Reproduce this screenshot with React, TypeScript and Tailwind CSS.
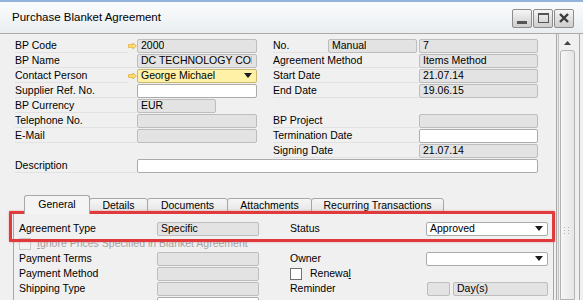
import type { ReactNode } from "react";

type Tone = "gray" | "white" | "yellow";

const toneClass: Record<Tone, string> = {
  gray: "bg-[#e3e3e3] border-[#bdbdbd]",
  white: "bg-white border-[#ababab]",
  yellow: "bg-[#fff1a6] border-[#c8b870]",
};

const DropArrow = () => (
  <svg width="8" height="5" viewBox="0 0 8 5" className="shrink-0">
    <path d="M0 0h8L4 5z" fill="#1a1a1a" />
  </svg>
);

const LinkArrow = () => (
  <svg width="10" height="8" viewBox="0 0 10 8">
    <path
      d="M0.5 2.5h5V0.7L9.3 4 5.5 7.3V5.5h-5z"
      fill="#ffe27a"
      stroke="#e3a92a"
      strokeWidth="0.9"
      strokeLinejoin="round"
    />
  </svg>
);

const Box = ({
  className,
  tone = "gray",
  drop = false,
  children,
}: {
  className: string;
  tone?: Tone;
  drop?: boolean;
  children?: ReactNode;
}) => (
  <div
    className={`h-[14px] shrink-0 border rounded-[2px] flex items-center justify-between pl-[3px] pr-[4px] overflow-hidden whitespace-nowrap leading-none ${toneClass[tone]} ${className}`}
  >
    <span className="min-w-0 overflow-hidden">{children}</span>
    {drop && <DropArrow />}
  </div>
);

const Label = ({ className, children }: { className: string; children?: ReactNode }) => (
  <div className={`h-[14px] shrink-0 flex items-center leading-none border-b border-[#e2e2e2] ${className}`}>
    {children}
  </div>
);

const Check = ({ disabled = false }: { disabled?: boolean }) => (
  <div
    className={`w-[12px] h-[12px] shrink-0 border ${
      disabled ? "border-[#c9c9c9] bg-[#f3f3f3]" : "border-[#707070] bg-white"
    }`}
  />
);

const tabs = [
  { name: "General", w: "w-[66px]" },
  { name: "Details", w: "w-[59px]" },
  { name: "Documents", w: "w-[81px]" },
  { name: "Attachments", w: "w-[85px]" },
  { name: "Recurring Transactions", w: "w-[133px]" },
];

const WinButton = ({ children }: { children: ReactNode }) => (
  <div className="w-[20px] h-[19px] border border-[#8d8d8d] rounded-[2px] bg-gradient-to-b from-[#f6f6f6] to-[#cdcdcd] flex items-center justify-center">
    {children}
  </div>
);

export default function App() {
  return (
    <div className="w-[583px] h-[300px] overflow-hidden bg-[#f0f0f0] text-[10.5px] text-black font-['Liberation_Sans',Arial,sans-serif] relative">
      {/* Title bar */}
      <div className="h-[34px] border-t-2 border-[#93b5dc] border-b border-b-[#ababab] bg-gradient-to-b from-[#fbfcfd] to-[#eaedf0] flex items-center justify-between pl-[12px] pr-[9px]">
        <span className="text-[11.5px] mt-[1px]">Purchase Blanket Agreement</span>
        <div className="flex gap-[1px] mt-[1px]">
          <WinButton>
            <div className="w-[10px] h-[3px] bg-[#555] mt-[8px]" />
          </WinButton>
          <WinButton>
            <div className="w-[11px] h-[10px] border border-[#555] border-t-2" />
          </WinButton>
          <WinButton>
            <svg width="10" height="10" viewBox="0 0 10 10">
              <path d="M1 1l8 8M9 1l-8 8" stroke="#3a3a3a" strokeWidth="2.4" />
            </svg>
          </WinButton>
        </div>
      </div>

      <div className="flex">
        {/* Main form */}
        <div className="w-[556px] shrink-0">
          <div className="pl-[15px] pt-[4px] flex flex-col">
            <div className="flex h-[15px] items-center">
              <Label className="w-[113px]">BP Code</Label>
              <div className="w-[9px] flex items-center"><LinkArrow /></div>
              <Box className="w-[120px]">2000</Box>
              <div className="w-[16px]" />
              <Label className="w-[55px]">No.</Label>
              <Box className="w-[89px]">Manual</Box>
              <div className="w-[2px]" />
              <Box className="w-[119px]">7</Box>
            </div>
            <div className="flex h-[15px] items-center">
              <Label className="w-[122px]">BP Name</Label>
              <Box className="w-[120px]">DC TECHNOLOGY CORPORATION</Box>
              <div className="w-[16px]" />
              <Label className="w-[146px]">Agreement Method</Label>
              <Box className="w-[119px]">Items Method</Box>
            </div>
            <div className="flex h-[15px] items-center">
              <Label className="w-[113px]">Contact Person</Label>
              <div className="w-[9px] flex items-center"><LinkArrow /></div>
              <Box className="w-[120px]" tone="yellow" drop>George Michael</Box>
              <div className="w-[16px]" />
              <Label className="w-[146px]">Start Date</Label>
              <Box className="w-[119px]">21.07.14</Box>
            </div>
            <div className="flex h-[15px] items-center">
              <Label className="w-[122px]">Supplier Ref. No.</Label>
              <Box className="w-[120px]" tone="white" />
              <div className="w-[16px]" />
              <Label className="w-[146px]">End Date</Label>
              <Box className="w-[119px]">19.06.15</Box>
            </div>
            <div className="flex h-[15px] items-center">
              <Label className="w-[122px]">BP Currency</Label>
              <Box className="w-[79px]">EUR</Box>
            </div>
            <div className="flex h-[15px] items-center">
              <Label className="w-[122px]">Telephone No.</Label>
              <Box className="w-[120px]" />
              <div className="w-[16px]" />
              <Label className="w-[146px]">BP Project</Label>
              <Box className="w-[119px]" />
            </div>
            <div className="flex h-[15px] items-center">
              <Label className="w-[122px]">E-Mail</Label>
              <Box className="w-[120px]" />
              <div className="w-[16px]" />
              <Label className="w-[146px]">Termination Date</Label>
              <Box className="w-[119px]" tone="white" />
            </div>
            <div className="flex h-[15px] items-center">
              <div className="w-[258px]" />
              <Label className="w-[146px]">Signing Date</Label>
              <Box className="w-[119px]">21.07.14</Box>
            </div>
            <div className="flex h-[15px] items-center">
              <Label className="w-[122px]">Description</Label>
              <Box className="w-[401px]" tone="white" />
            </div>
          </div>

          {/* Tabs */}
          <div className="pl-[13px] mt-[22px]">
            <div className="flex items-end h-[18px] pl-[11px]">
              {tabs.map((t, i) => (
                <div
                  key={t.name}
                  className={`${t.w} shrink-0 flex items-center justify-center border border-[#a7a7a7] rounded-t-[3px] -mr-px ${
                    i === 0
                      ? "h-[19px] bg-[#f4f4f4] border-b-0 relative z-10 -mb-px"
                      : "h-[15px] bg-gradient-to-b from-[#f7f7f7] to-[#e4e4e4]"
                  }`}
                >
                  {t.name}
                </div>
              ))}
            </div>
            <div className="w-[541px] h-[100px] border border-[#a7a7a7] border-b-0 pl-[5px] pt-[7px] flex flex-col">
              <div className="flex h-[15px] items-center">
                <div className="w-[138px] shrink-0">Agreement Type</div>
                <Box className="w-[102px]">Specific</Box>
                <div className="w-[31px] shrink-0" />
                <div className="w-[136px] shrink-0">Status</div>
                <Box className="w-[122px]" tone="white" drop>Approved</Box>
              </div>
              <div className="flex h-[15px] items-center gap-[6px] text-[#a3a3a3]">
                <Check disabled />
                <span>
                  <span className="underline">I</span>gnore Prices Specified in Blanket Agreement
                </span>
              </div>
              <div className="flex h-[15px] items-center">
                <div className="w-[138px] shrink-0">Payment Terms</div>
                <Box className="w-[102px]" />
                <div className="w-[31px] shrink-0" />
                <div className="w-[136px] shrink-0">Owner</div>
                <Box className="w-[122px]" tone="white" drop />
              </div>
              <div className="flex h-[15px] items-center">
                <div className="w-[138px] shrink-0">Payment Method</div>
                <Box className="w-[102px]" />
                <div className="w-[31px] shrink-0" />
                <Check />
                <span className="ml-[8px]">
                  Renewa<span className="underline">l</span>
                </span>
              </div>
              <div className="flex h-[15px] items-center">
                <div className="w-[138px] shrink-0">Shipping Type</div>
                <Box className="w-[102px]" />
                <div className="w-[31px] shrink-0" />
                <div className="w-[137px] shrink-0">Reminder</div>
                <Box className="w-[23px]" />
                <div className="w-[3px] shrink-0" />
                <Box className="w-[95px]">Day(s)</Box>
              </div>
              <div className="flex h-[15px] items-center">
                <div className="w-[138px] shrink-0" />
                <Box className="w-[102px]" tone="white" />
              </div>
            </div>
          </div>
        </div>

        {/* Scrollbar */}
        <div className="flex h-[266px] shrink-0">
          <div className="w-[3px] border-l border-r border-l-[#a9a9a9] border-r-[#c4c4c4] bg-[#e8e8e8]" />
          <div className="w-[16px] flex flex-col pt-[2px] items-center">
            <div className="w-[15px] h-[13px] flex items-center justify-center">
              <svg width="7" height="4" viewBox="0 0 7 4">
                <path d="M0 4h7L3.5 0z" fill="#444" />
              </svg>
            </div>
            <div className="w-[15px] flex-1 mt-[1px] border border-[#b4b4b4] rounded-t-[3px] bg-gradient-to-r from-[#f6f6f6] to-[#e6e6e6] flex flex-col items-center">
              <svg width="6" height="8" viewBox="0 0 6 8" className="mt-[176px]">
                <g fill="#b0b0b0">
                  <rect x="0" y="0" width="1" height="1" />
                  <rect x="4" y="0" width="1" height="1" />
                  <rect x="0" y="3" width="1" height="1" />
                  <rect x="4" y="3" width="1" height="1" />
                  <rect x="0" y="6" width="1" height="1" />
                  <rect x="4" y="6" width="1" height="1" />
                </g>
              </svg>
            </div>
          </div>
          <div className="w-[5px] border-r border-[#a9a9a9]" />
        </div>
      </div>

      {/* Highlight annotation */}
      <div className="absolute left-[9px] top-[211px] w-[546px] h-[31px] border-[3px] border-[#e03a3c] rounded-[1px] shadow-[0_0_2px_rgba(224,58,60,0.5)] pointer-events-none" />
    </div>
  );
}
